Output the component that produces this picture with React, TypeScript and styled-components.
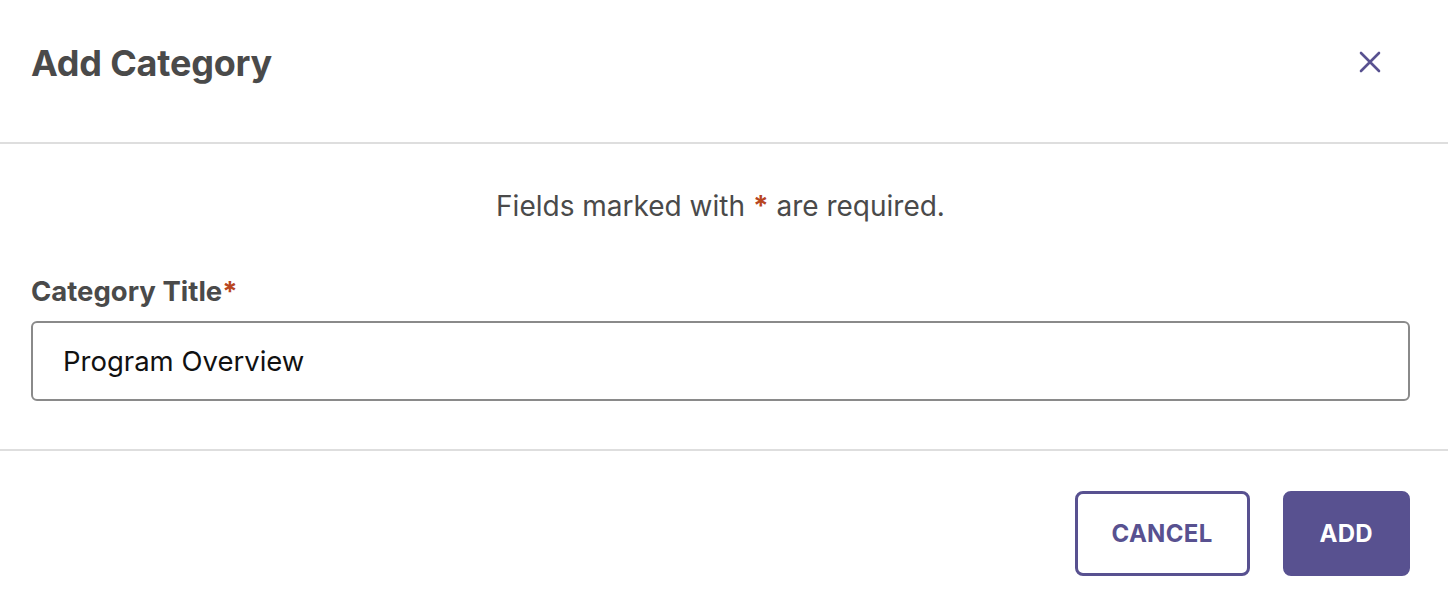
import styled, { createGlobalStyle } from "styled-components";

const GlobalStyle = createGlobalStyle`
	body {
		margin: 0;
		background: #ffffff;
		font-family: Inter, "Liberation Sans", sans-serif;
	}
`

export default function App() {
	return (
		<>
			<GlobalStyle />
			<Dialog>
				<Header>
					<Title>Add Category</Title>
					<CloseButton aria-label="Close">
						<svg width="22" height="22" viewBox="0 0 22 22">
							<path d="M2 2 L20 20 M20 2 L2 20" stroke="#585190" strokeWidth="2.6" strokeLinecap="round" />
						</svg>
					</CloseButton>
				</Header>
				<Body>
					<Note>Fields marked with <Star>*</Star> are required.</Note>
					<Label htmlFor="title">Category Title<Star>*</Star></Label>
					<Input id="title" defaultValue="Program Overview" />
				</Body>
				<Footer>
					<Button $variant="outline">CANCEL</Button>
					<Button $variant="solid">ADD</Button>
				</Footer>
			</Dialog>
		</>
	)
}

const Dialog = styled.div`
	width: 1448px;
	height: 600px;
	display: flex;
	flex-direction: column;
	background: #fff;
	overflow: hidden;
`

const Header = styled.div`
	height: 142px;
	padding: 0 31px;
	display: flex;
	align-items: center;
	justify-content: space-between;
	border-bottom: 2px solid #dedede;
	box-sizing: content-box;
`

const Title = styled.h1`
	margin: 0;
	margin-top: -16px;
	font-size: 36px;
	font-weight: 700;
	color: #4a4a4a;
	letter-spacing: -0.2px;
`

const CloseButton = styled.button`
	border: none;
	background: transparent;
	padding: 0;
	margin-top: -18px;
	margin-right: 36px;
	display: flex;
	cursor: pointer;
`

const Body = styled.div`
	height: 305px;
	padding: 0 38px 0 31px;
	display: flex;
	flex-direction: column;
	border-bottom: 2px solid #dedede;
	box-sizing: content-box;
`

const Note = styled.p`
	margin: 46px 0 0;
	text-align: center;
	font-size: 28px;
	line-height: 32px;
	color: #4a4a4a;
`

const Star = styled.span`
	color: #b8461f;
	font-weight: 700;
`

const Label = styled.label`
	margin-top: 53px;
	font-size: 27.5px;
	line-height: 32px;
	font-weight: 700;
	color: #4a4a4a;
`

const Input = styled.input`
	margin-top: 14px;
	height: 80px;
	box-sizing: border-box;
	border: 2px solid #8a8a8a;
	border-radius: 6px;
	padding: 0 30px;
	font-family: Inter, "Liberation Sans", sans-serif;
	font-size: 27.5px;
	color: #111;
	outline: none;
`

const Footer = styled.div`
	flex: 1;
	padding: 40px 38px 0 0;
	display: flex;
	justify-content: flex-end;
	align-items: flex-start;
	gap: 33px;
`

const Button = styled.button<{ $variant: "outline" | "solid" }>`
	height: 85px;
	padding: 0 34px;
	box-sizing: border-box;
	border-radius: 8px;
	border: 3px solid #585190;
	background: ${p => p.$variant === "outline" ? "#fff" : "#585190"};
	color: ${p => p.$variant === "outline" ? "#585190" : "#fff"};
	font-family: Inter, "Liberation Sans", sans-serif;
	font-size: 24px;
	font-weight: 700;
	letter-spacing: 0.3px;
	cursor: pointer;
`
